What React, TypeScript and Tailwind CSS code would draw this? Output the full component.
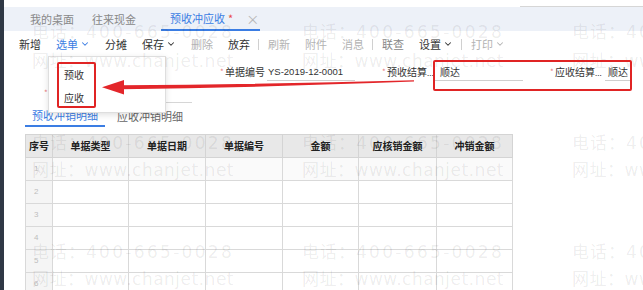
import React from 'react';
import { ChevronDown } from 'lucide-react';

type Tone = 'dark' | 'blue' | 'muted' | 'mid';
type Tool = { label: string; tone: Tone; caret?: boolean } | 'sep';

const tools: Tool[] = [
  { label: '新增', tone: 'dark' },
  { label: '选单', tone: 'blue', caret: true },
  { label: '分摊', tone: 'dark' },
  { label: '保存', tone: 'dark', caret: true },
  { label: '删除', tone: 'muted' },
  { label: '放弃', tone: 'dark' },
  'sep',
  { label: '刷新', tone: 'muted' },
  { label: '附件', tone: 'muted' },
  { label: '消息', tone: 'muted' },
  'sep',
  { label: '联查', tone: 'mid' },
  { label: '设置', tone: 'dark', caret: true },
  'sep',
  { label: '打印', tone: 'muted', caret: true },
];

const toneClass: Record<Tone, string> = {
  dark: 'text-[#333]',
  blue: 'text-[#3b7de3]',
  muted: 'text-[#b3b3b3]',
  mid: 'text-[#888]',
};

const columns = [
  { title: '序号', w: 'w-[27px]' },
  { title: '单据类型', w: 'w-[76px]' },
  { title: '单据日期', w: 'w-[77px]' },
  { title: '单据编号', w: 'w-[77px]' },
  { title: '金额', w: 'w-[76px]' },
  { title: '应核销金额', w: 'w-[78px]' },
  { title: '冲销金额', w: 'w-[76px]' },
];

const Star = () => <span className="w-[5px] text-[8px] leading-none text-[#e98080]">*</span>;

const Watermark = () => {
  const xs = [32, 302, 572];
  const rows = [
    { phone: 22, url: 51 },
    { phone: 133, url: 160 },
    { phone: 242, url: 269 },
  ];
  return (
    <div className="pointer-events-none absolute inset-0 overflow-hidden font-['DejaVu_Sans',sans-serif] text-[17px] leading-[18px] text-black/[0.08]">
      {rows.map((r, i) =>
        xs.map((x) => (
          <React.Fragment key={`${i}-${x}`}>
            <div className="absolute whitespace-nowrap" style={{ left: x, top: r.phone }}>
              <span className="font-['Noto_Sans_CJK_SC',sans-serif] tracking-[1px]">电话：</span>
              <span className="tracking-[2.3px]">400-665-0028</span>
            </div>
            <div className="absolute whitespace-nowrap" style={{ left: x, top: r.url }}>
              <span className="font-['Noto_Sans_CJK_SC',sans-serif] tracking-[0.5px]">网址：</span>
              <span className="tracking-[0.5px]">www.chanjet.net</span>
            </div>
          </React.Fragment>
        ))
      )}
    </div>
  );
};

export default function App() {
  return (
    <div className="relative flex h-[290px] w-[643px] overflow-hidden bg-white font-['Noto_Sans_CJK_SC','Liberation_Sans',sans-serif]">
      <div className="w-[4px] shrink-0 bg-[#2f3845]" />

      <div className="flex min-w-0 flex-1 flex-col">
        {/* top strip */}
        <div className="flex h-[7px] shrink-0 justify-end bg-white">
          <div className="w-[123px] border-b border-[#d6d6d6]" />
        </div>

        {/* page tabs */}
        <div className="flex h-[24px] shrink-0 items-stretch whitespace-nowrap bg-[#edf1f8] pl-[26px] text-[11px] leading-none">
          <div className="flex items-center text-[#888]">我的桌面</div>
          <div className="ml-[18px] flex items-center text-[#888]">往来现金</div>
          <div className="ml-[25px] flex w-[99px] shrink-0 items-center border-b-2 border-[#3b7de3] pl-[9px]">
            <span className="text-[#3b7de3]">预收冲应收</span>
            <span className="ml-[3px] text-[#e94a4a]">*</span>
            <span className="ml-[13px] text-[13px] text-[#b5b5b5]">×</span>
          </div>
        </div>

        {/* toolbar */}
        <div className="flex h-[26px] shrink-0 items-center gap-[15px] whitespace-nowrap pl-[15px] text-[11px] leading-none">
          {tools.map((t, i) =>
            t === 'sep' ? (
              <div key={i} className="-ml-[7px] -mr-[6px] h-[11px] w-px bg-[#d0d0d0]" />
            ) : (
              <div key={i} className={`flex items-center ${toneClass[t.tone]}`}>
                <span>{t.label}</span>
                {t.caret && <ChevronDown size={10} strokeWidth={2.5} className="ml-[2px]" />}
              </div>
            )
          )}
        </div>

        {/* form row 1 */}
        <div className="flex h-[30px] shrink-0 items-center pl-[216px] text-[10px] leading-none text-[#333]">
          <Star />
          <span className="w-[42px] whitespace-nowrap">单据编号</span>
          <div className="flex h-[17px] w-[88px] items-center border-b border-[#cfcfcf] pl-[1px] font-['Liberation_Sans',sans-serif] text-[9.5px]">
            YS-2019-12-0001
          </div>
          <div className="ml-[27px] flex items-center">
            <Star />
            <span className="w-[48px] whitespace-nowrap">
              预收结算<span className="text-[8px]">...</span>
            </span>
          </div>
          <div className="flex h-[17px] w-[88px] items-center border-b border-[#cfcfcf] pl-[5px]">顺达</div>
          <div className="ml-[27px] flex items-center">
            <Star />
            <span className="w-[50px] whitespace-nowrap">
              应收结算<span className="text-[8px]">...</span>
            </span>
          </div>
          <div className="flex h-[17px] w-[27px] items-center border-b border-[#cfcfcf] pl-[3px]">顺达</div>
        </div>

        {/* form row 2 */}
        <div className="flex h-[19px] shrink-0 items-start pl-[40px] pt-[2px] text-[10px] leading-none">
          <Star />
          <div className="ml-[56px] mt-[13px] h-px w-[87px] bg-[#d6d6d6]" />
        </div>

        {/* detail tabs */}
        <div className="flex h-[21px] shrink-0 items-stretch whitespace-nowrap pl-[21px] text-[11px] leading-none">
          <div className="flex items-center border-b-2 border-[#3b7de3] px-[7px] text-[#3b7de3]">预收冲销明细</div>
          <div className="ml-[5px] flex items-center px-[7px] text-[#666]">应收冲销明细</div>
        </div>

        {/* table */}
        <div className="ml-[21px] mt-[7px]">
          <table className="table-fixed border-collapse text-[10px] leading-none">
            <thead>
              <tr className="h-[23px] bg-[#e8e8e8]">
                {columns.map((c) => (
                  <th key={c.title} className={`${c.w} border border-[#d4d4d4] p-0 text-center font-bold text-[#222]`}>
                    {c.title}
                  </th>
                ))}
              </tr>
            </thead>
            <tbody>
              {[1, 2, 3, 4, 5, 6].map((n) => (
                <tr key={n} className={`h-[23px] ${n === 1 ? 'bg-[#fafafa]' : 'bg-white'}`}>
                  {columns.map((c, ci) =>
                    ci === 0 ? (
                      <td key={ci} className="border border-[#d9d9d9] bg-[#f5f5f5] pl-[8px] font-['Liberation_Sans',sans-serif] text-[8px] text-[#bdbdbd]">
                        {n}
                      </td>
                    ) : (
                      <td key={ci} className="border border-[#d9d9d9]" />
                    )
                  )}
                </tr>
              ))}
            </tbody>
          </table>
        </div>
      </div>

      {/* dropdown of 选单 */}
      <div className="absolute left-[48px] top-[56px] h-[57px] w-[118px] border border-[#dedede] bg-white shadow-[0_2px_6px_rgba(0,0,0,0.12)]">
        <div className="pl-[15px] pt-[13px] text-[10px] leading-none text-[#333]">预收</div>
        <div className="pl-[15px] pt-[13px] text-[10px] leading-none text-[#333]">应收</div>
      </div>

      <Watermark />

      {/* annotations */}
      <div className="pointer-events-none absolute left-[57px] top-[62px] h-[46px] w-[39px] rounded-[2px] border-2 border-[#e02424]" />
      <div className="pointer-events-none absolute left-[433px] top-[60px] h-[31px] w-[199px] rounded-[2px] border-2 border-[#e02424]" />
      <svg className="pointer-events-none absolute left-0 top-0" width="643" height="290" viewBox="0 0 643 290">
        <path d="M121 85.2 Q 260 84.5 414 80.2 L 414 81.6 Q 260 87.5 121 89.2 Z" fill="#e3262a" />
        <polygon points="102,87.2 124,80 124,94.5" fill="#e3262a" />
      </svg>
    </div>
  );
}
